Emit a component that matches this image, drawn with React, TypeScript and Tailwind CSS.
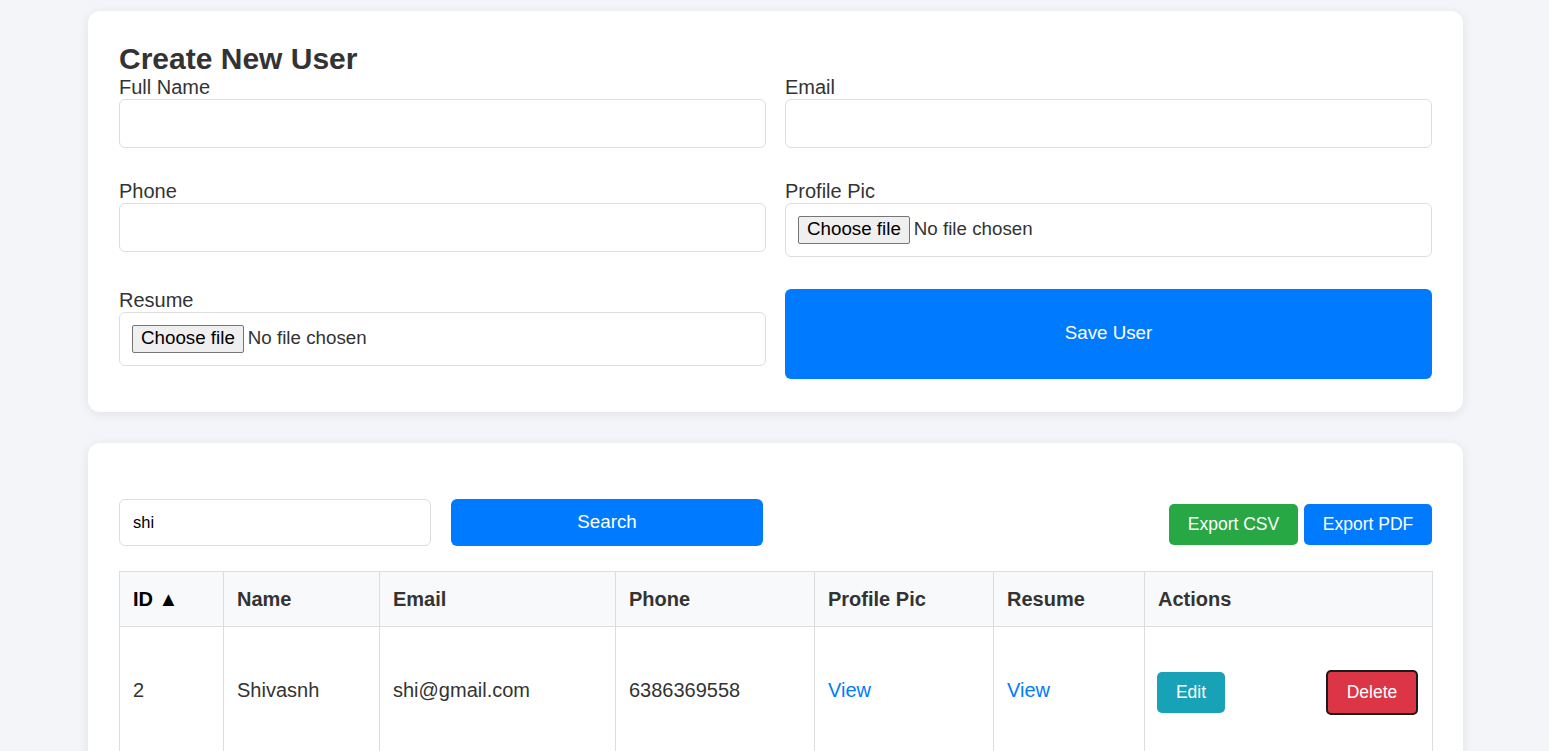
import React from "react";

const font = { fontFamily: '"Liberation Sans", Arial, sans-serif' };

function FileBox() {
    return (
        <div className="flex items-center h-[54px] px-[12px] bg-white border border-[#dddddd] rounded-[6px]">
            <span className="h-[28px] px-[8px] flex items-center text-[18.75px] text-black bg-[#efefef] border border-[#767676] rounded-[2px]">
                Choose file
            </span>
            <span className="ml-[4px] text-[18.75px] text-[#333]">No file chosen</span>
        </div>
    );
}

function Field({ label, children }: { label: string; children: React.ReactNode }) {
    return (
        <div className="flex flex-col">
            <label className="text-[20px] leading-[23px] text-[#333]">{label}</label>
            {children}
        </div>
    );
}

function TextBox() {
    return <input className="h-[49px] w-full px-[13px] bg-white border border-[#dddddd] rounded-[6px] outline-none" />;
}

export default function App() {
    const cols = [
        { name: "ID ▲", w: "w-[104px]", dark: true },
        { name: "Name", w: "w-[156px]" },
        { name: "Email", w: "w-[236px]" },
        { name: "Phone", w: "w-[199px]" },
        { name: "Profile Pic", w: "w-[179px]" },
        { name: "Resume", w: "w-[151px]" },
        { name: "Actions", w: "w-[288px]" },
    ];

    return (
        <div className="min-h-[751px] bg-[#f4f5f8] pt-[11px] pb-[40px]" style={font}>
            {/* create user card */}
            <div className="ml-[88px] w-[1375px] bg-white rounded-[12px] shadow-[0_2px_12px_rgba(0,0,0,0.08)] px-[31px] pt-[31px] pb-[33px]">
                <h2 className="text-[30px] leading-[33.5px] font-bold text-[#333]">Create New User</h2>
                <div className="grid grid-cols-2 gap-x-[19px] gap-y-[32px]">
                    <Field label="Full Name">
                        <TextBox />
                    </Field>
                    <Field label="Email">
                        <TextBox />
                    </Field>
                    <Field label="Phone">
                        <TextBox />
                    </Field>
                    <Field label="Profile Pic">
                        <FileBox />
                    </Field>
                    <Field label="Resume">
                        <FileBox />
                    </Field>
                    <button className="h-[90px] self-start bg-[#007bff] text-white text-[18.75px] rounded-[6px]">
                        Save User
                    </button>
                </div>
            </div>

            {/* users list card */}
            <div className="ml-[88px] mt-[31px] w-[1375px] bg-white rounded-[12px] shadow-[0_2px_12px_rgba(0,0,0,0.08)] px-[31px] pt-[56px] pb-[31px]">
                <div className="flex items-end justify-between">
                    <div className="flex gap-[20px]">
                        <input
                            defaultValue="shi"
                            className="w-[312px] h-[47px] px-[13px] text-[16.5px] text-black bg-white border border-[#dddddd] rounded-[6px] outline-none"
                        />
                        <button className="w-[312px] h-[47px] bg-[#007bff] text-white text-[18.75px] rounded-[6px]">
                            Search
                        </button>
                    </div>
                    <div className="flex gap-[6px] mb-[1px]">
                        <button className="h-[41px] w-[129px] bg-[#28a745] text-white text-[17.5px] rounded-[5px]">
                            Export CSV
                        </button>
                        <button className="h-[41px] w-[128px] bg-[#007bff] text-white text-[17.5px] rounded-[5px]">
                            Export PDF
                        </button>
                    </div>
                </div>

                <table className="mt-[25px] w-full border-collapse table-fixed">
                    <thead>
                        <tr className="bg-[#f8f9fa]">
                            {cols.map((c) => (
                                <th
                                    key={c.name}
                                    className={`${c.w} h-[55px] px-[13px] text-left text-[20px] font-bold border border-[#dddddd] ${c.dark ? "text-black" : "text-[#333]"}`}
                                >
                                    {c.name}
                                </th>
                            ))}
                        </tr>
                    </thead>
                    <tbody>
                        <tr className="text-[20px] text-[#333]">
                            <td className="h-[128px] px-[13px] border border-[#dddddd]">2</td>
                            <td className="px-[13px] border border-[#dddddd]">Shivasnh</td>
                            <td className="px-[13px] border border-[#dddddd]">shi@gmail.com</td>
                            <td className="px-[13px] border border-[#dddddd]">6386369558</td>
                            <td className="px-[13px] border border-[#dddddd] text-[#007bff]">View</td>
                            <td className="px-[13px] border border-[#dddddd] text-[#007bff]">View</td>
                            <td className="pl-[12px] pr-[14px] border border-[#dddddd]">
                                <div className="flex items-center justify-between mt-[4px]">
                                    <button className="h-[41px] w-[68px] bg-[#17a2b8] text-white text-[17.5px] rounded-[5px]">
                                        Edit
                                    </button>
                                    <button className="h-[45px] w-[92px] bg-[#dc3545] text-white text-[17.5px] rounded-[5px] border-2 border-[#1a1a1a]">
                                        Delete
                                    </button>
                                </div>
                            </td>
                        </tr>
                    </tbody>
                </table>
            </div>
        </div>
    );
}
